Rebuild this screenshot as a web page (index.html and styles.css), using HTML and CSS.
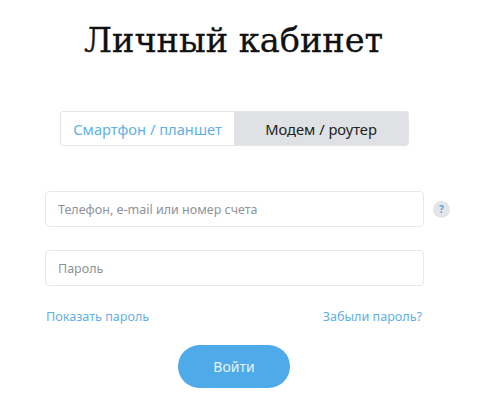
FILE: index.html
```html
<!DOCTYPE html>
<html lang="ru">
  <head>
    <meta charset="utf-8">
    <meta name="viewport" content="width=device-width, initial-scale=1" />
    <title>Личный кабинет</title>
    <link rel="stylesheet" href="styles.css">
  </head>
  <body>
    <h1 class="title">Личный кабинет</h1>

    <div class="tabs">
      <a class="tab" href="#">Смартфон / планшет</a>
      <a class="tab tab-active" href="#">Модем / роутер</a>
    </div>

    <form class="login">
      <div class="field-row">
        <input class="field" type="text" placeholder="Телефон, e-mail или номер счета">
        <span class="help">?</span>
      </div>
      <div class="field-row">
        <input class="field" type="password" placeholder="Пароль">
      </div>
      <div class="links">
        <a href="#">Показать пароль</a>
        <a href="#">Забыли пароль?</a>
      </div>
      <button class="submit" type="button">Войти</button>
    </form>
  </body>
</html>
```

FILE: styles.css
```css
*{
  box-sizing: border-box;
}

body{
  margin: 0;
  padding: 19px 0 0 45px;
  width: 500px;
  height: 420px;
  overflow: hidden;
  background: #fff;
  font-family: "Noto Sans", "Open Sans", sans-serif;
}

.title{
  margin: 0 0 48px 39px;
  font-family: "DejaVu Serif", "Liberation Serif", serif;
  font-size: 33.6px;
  line-height: 44px;
  font-weight: normal;
  color: #111;
  -webkit-text-stroke: .3px #111;
}

.tabs{
  display: flex;
  width: 349px;
  height: 35px;
  margin-left: 15px;
  border: 1px solid #e3e5e8;
  border-radius: 3px;
  overflow: hidden;
}

.tab{
  display: flex;
  align-items: center;
  justify-content: center;
  width: 173px;
  font-size: 14.7px;
  color: #5fb0e6;
  text-decoration: none;
}

.tab-active{
  flex: 1;
  background: #dfe1e4;
  color: #222;
}

.login{
  margin-top: 45px;
}

.field-row{
  display: flex;
  align-items: center;
  gap: 9px;
  margin-bottom: 23px;
}

.field{
  width: 379px;
  height: 36px;
  padding: 0 12px;
  border: 1px solid #e6e8ea;
  border-radius: 4px;
  font-family: inherit;
  font-size: 12.5px;
  outline: none;
}

.field::placeholder{
  color: #8f9398;
  opacity: 1;
}

.help{
  width: 17px;
  height: 17px;
  border-radius: 50%;
  background: #e3e5e8;
  color: #5fa5dc;
  font-size: 10px;
  font-weight: bold;
  line-height: 17px;
  text-align: center;
}

.links{
  display: flex;
  justify-content: space-between;
  width: 376px;
  margin: -1px 0 0 1px;
  font-size: 12.6px;
  line-height: 18px;
}

.links a{
  color: #5fb0e6;
  text-decoration: none;
}

.submit{
  display: block;
  width: 112px;
  height: 43px;
  margin: 19px 0 0 133px;
  border: 0;
  border-radius: 22px;
  background: #4faaea;
  color: #e8f4fd;
  font-family: inherit;
  font-size: 14px;
}
```
